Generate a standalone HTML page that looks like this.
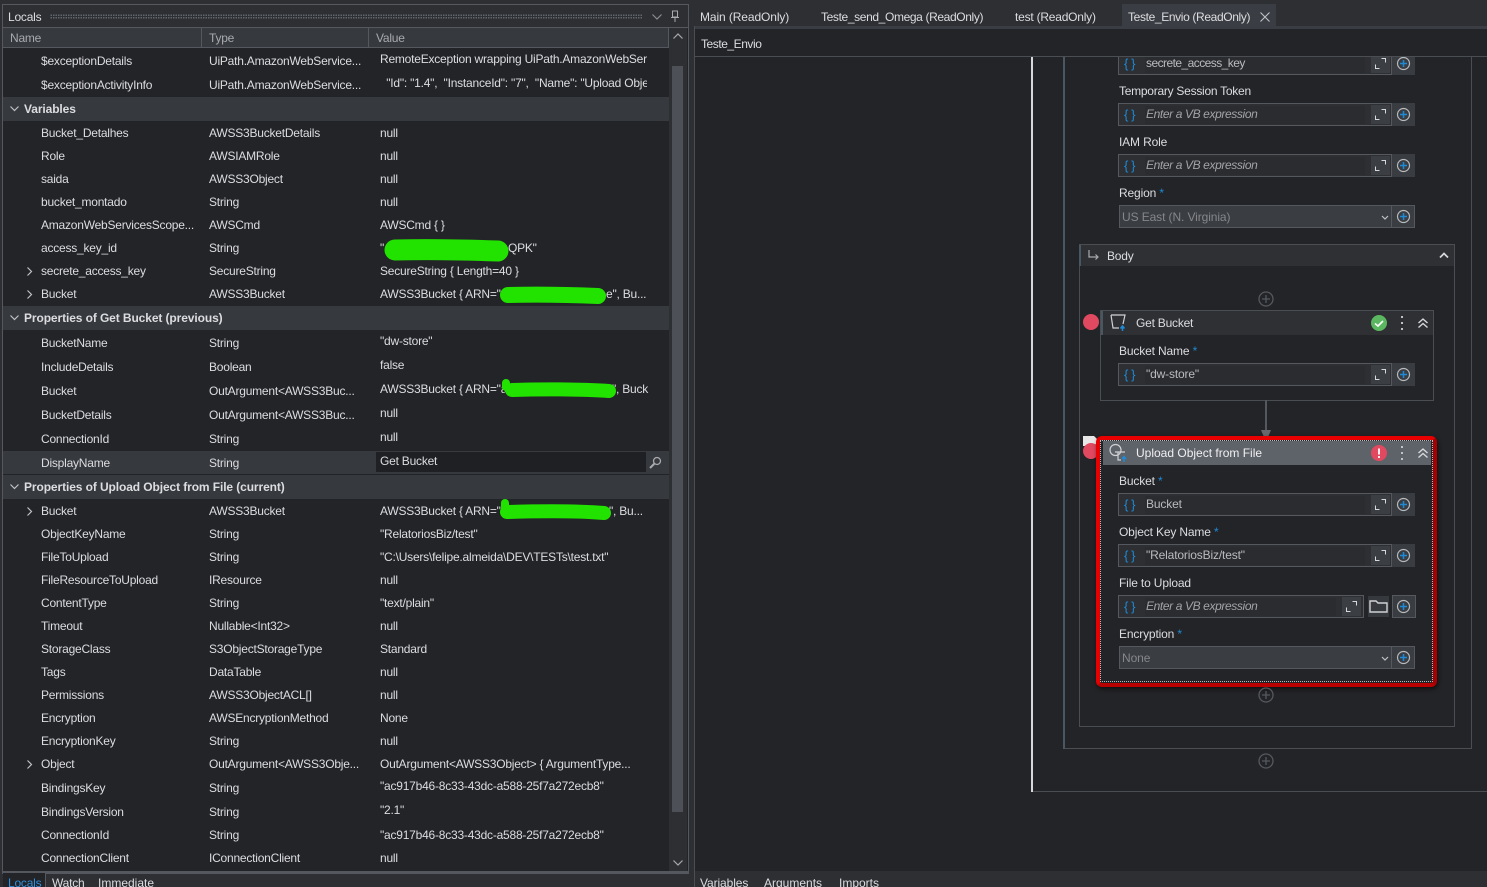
<!DOCTYPE html>
<html><head><meta charset="utf-8"><style>
html,body{margin:0;padding:0;background:#2d2f33;height:887px;overflow:hidden}
body{width:1487px;height:887px;overflow:hidden;position:relative;font:12px/16px "Liberation Sans",sans-serif;color:#dcdde0;letter-spacing:-.22px}
div,span,svg,i{position:absolute}
svg{overflow:visible}
.nw{white-space:nowrap}
.r{left:0;width:668px;height:16px;white-space:nowrap}
.r span{top:0}
.n{left:41px}.t{left:209px}.v{left:380px}
.h{left:3px;width:666px;height:24px;background:#36393e}
.h span{left:21px;top:4px;font-weight:bold;letter-spacing:-.1px}
.l{left:1119px;white-space:nowrap;letter-spacing:-.15px}
.l b{color:#1e8ad6;font-weight:normal}
.f{left:1118px;width:295px;height:21px;border:1px solid #55585e;background:#2d2f33}
.f .x{left:26px;top:2px;width:220px;height:18px;background:#2a2c30;color:#b9bbbf;line-height:17px;text-indent:1px;white-space:nowrap;letter-spacing:-.15px}
.f .x.p{font-style:italic;color:#a2a4a8;letter-spacing:-.38px}
.f .br{left:5px;top:2px;color:#1e8ad6;font-size:13px;line-height:17px;letter-spacing:-.4px;white-space:pre}
.f .e{left:252px;top:1px;width:19px;height:19px;background:#3b3e43}
.f .pb{left:272px;top:-1px;width:23px;height:23px;background:#393c41;border-left:1px solid #55585e}
.c{left:1119px;width:294px;height:21px;border:1px solid #55585e;background:#3a3d42;color:#85878b}
.c .tx{left:2px;top:2px;line-height:18px;letter-spacing:-.1px}
</style></head><body>
<svg width="0" height="0" style="left:0;top:0"><defs>
<symbol id="ex" viewBox="0 0 19 19"><path d="M4.500 10.500v4h4M10.500 4.500h4v4" fill="none" stroke="#d8d9dc" stroke-width="1"/></symbol>
<symbol id="pl" viewBox="0 0 23 23"><circle cx="11.500" cy="11.500" r="6" fill="none" stroke="#b9bbbf" stroke-width="1.200"/><path d="M8 11.500h7M11.500 8v7" stroke="#1e8ad6" stroke-width="1.500"/></symbol>
<symbol id="dbl" viewBox="0 0 12 12"><path d="M1.500 6l4.500-4 4.500 4M1.500 10.500l4.500-4 4.500 4" fill="none" stroke="#d8d9dc" stroke-width="1.400"/></symbol>
</defs></svg>

<!-- LEFT PANEL -->
<div style="left:2px;top:4px;width:685px;height:868px;border:1px solid #55585e;background:#232427"></div>
<div style="left:3px;top:5px;width:685px;height:22px;background:#2d2f33;border-bottom:1px solid #55585e"></div>
<div class="nw" style="left:8px;top:9px">Locals</div>
<div style="left:50px;top:14px;width:593px;height:5px;background-image:radial-gradient(#63666b 0.7px,transparent 0.8px);background-size:2.500px 2.500px"></div>
<svg style="left:652px;top:14px" width="10" height="6"><path d="M0.500 0.500l4.500 4.500 4.500-4.500" fill="none" stroke="#8a8c90" stroke-width="1.200"/></svg>
<svg style="left:671px;top:10px" width="8" height="12"><path d="M1.500 1h5v6h-5zM0 7.500h8M4 8v4" fill="none" stroke="#a8aaae"/></svg>
<div style="left:3px;top:28px;width:665px;height:19px;background:#36393e;border-bottom:1px solid #55585e;border-right:1px solid #55585e"></div>
<div style="left:201px;top:28px;width:1px;height:19px;background:#55585e"></div>
<div style="left:368px;top:28px;width:1px;height:19px;background:#55585e"></div>
<div class="nw" style="left:10px;top:30px;color:#a8aaae">Name</div>
<div class="nw" style="left:209px;top:30px;color:#a8aaae">Type</div>
<div class="nw" style="left:376px;top:30px;color:#a8aaae">Value</div>

<!-- scrollbar -->
<div style="left:669px;top:28px;width:18px;height:844px;background:#2d2f33"></div>
<div style="left:672px;top:66px;width:11px;height:746px;background:#4d5057"></div>
<svg style="left:673px;top:33px" width="10" height="6"><path d="M0.500 5.500l4.500-4.500 4.500 4.500" fill="none" stroke="#a8aaae" stroke-width="1.200"/></svg>
<svg style="left:673px;top:860px" width="10" height="6"><path d="M0.500 0.500l4.500 4.500 4.500-4.500" fill="none" stroke="#a8aaae" stroke-width="1.200"/></svg>

<!-- section headers -->
<div class="h" style="top:97px"><span>Variables</span></div>
<div class="h" style="top:306px"><span>Properties of Get Bucket (previous)</span></div>
<div class="h" style="top:475px"><span>Properties of Upload Object from File (current)</span></div>
<svg style="left:10px;top:106px" width="9" height="6"><path d="M0.500 0.500l4 4 4-4" fill="none" stroke="#c0c2c6" stroke-width="1.200"/></svg>
<svg style="left:10px;top:315px" width="9" height="6"><path d="M0.500 0.500l4 4 4-4" fill="none" stroke="#c0c2c6" stroke-width="1.200"/></svg>
<svg style="left:10px;top:484px" width="9" height="6"><path d="M0.500 0.500l4 4 4-4" fill="none" stroke="#c0c2c6" stroke-width="1.200"/></svg>
<svg style="left:27px;top:267px" width="6" height="9"><path d="M0.500 0.500l4 4-4 4" fill="none" stroke="#c0c2c6" stroke-width="1.200"/></svg>
<svg style="left:27px;top:290px" width="6" height="9"><path d="M0.500 0.500l4 4-4 4" fill="none" stroke="#c0c2c6" stroke-width="1.200"/></svg>
<svg style="left:27px;top:507px" width="6" height="9"><path d="M0.500 0.500l4 4-4 4" fill="none" stroke="#c0c2c6" stroke-width="1.200"/></svg>
<svg style="left:27px;top:760px" width="6" height="9"><path d="M0.500 0.500l4 4-4 4" fill="none" stroke="#c0c2c6" stroke-width="1.200"/></svg>

<!-- display name row -->
<div style="left:3px;top:451px;width:666px;height:23px;background:#36393e"></div>
<div style="left:376px;top:452px;width:270px;height:20px;background:#1f2023"></div>
<svg style="left:649px;top:456px" width="13" height="13"><circle cx="8" cy="5" r="3.500" fill="none" stroke="#a8aaae" stroke-width="1.300"/><path d="M5.500 7.500L1 12" stroke="#a8aaae" stroke-width="2"/></svg>

<!-- rows -->
<div class="r" style="top:53px"><span class="n">$exceptionDetails</span><span class="t">UiPath.AmazonWebService...</span></div>
<div class="nw" style="left:380px;top:51px;width:267px;overflow:hidden">RemoteException wrapping UiPath.AmazonWebServices</div>
<div class="r" style="top:77px"><span class="n">$exceptionActivityInfo</span><span class="t">UiPath.AmazonWebService...</span></div>
<div class="nw" style="left:380px;top:75px;width:267px;overflow:hidden;white-space:pre">  "Id": "1.4",  "InstanceId": "7",  "Name": "Upload Object</div>
<div class="r" style="top:125px"><span class="n">Bucket_Detalhes</span><span class="t">AWSS3BucketDetails</span><span class="v">null</span></div>
<div class="r" style="top:148px"><span class="n">Role</span><span class="t">AWSIAMRole</span><span class="v">null</span></div>
<div class="r" style="top:171px"><span class="n">saida</span><span class="t">AWSS3Object</span><span class="v">null</span></div>
<div class="r" style="top:194px"><span class="n">bucket_montado</span><span class="t">String</span><span class="v">null</span></div>
<div class="r" style="top:217px"><span class="n">AmazonWebServicesScope...</span><span class="t">AWSCmd</span><span class="v">AWSCmd { }</span></div>
<div class="r" style="top:240px"><span class="n">access_key_id</span><span class="t">String</span><span class="v">"</span><span style="left:508px">QPK"</span></div>
<div class="r" style="top:263px"><span class="n">secrete_access_key</span><span class="t">SecureString</span><span class="v">SecureString { Length=40 }</span></div>
<div class="r" style="top:286px"><span class="n">Bucket</span><span class="t">AWSS3Bucket</span><span class="v">AWSS3Bucket { ARN="a</span><span style="left:606px">e", Bu...</span></div>
<div class="r" style="top:335px"><span class="n">BucketName</span><span class="t">String</span><span class="v" style="top:-2px">"dw-store"</span></div>
<div class="r" style="top:359px"><span class="n">IncludeDetails</span><span class="t">Boolean</span><span class="v" style="top:-2px">false</span></div>
<div class="r" style="top:383px"><span class="n">Bucket</span><span class="t">OutArgument&lt;AWSS3Buc...</span><span class="v" style="top:-2px">AWSS3Bucket { ARN="a</span><span style="left:612px;top:-2px">", Buck</span></div>
<div class="r" style="top:407px"><span class="n">BucketDetails</span><span class="t">OutArgument&lt;AWSS3Buc...</span><span class="v" style="top:-2px">null</span></div>
<div class="r" style="top:431px"><span class="n">ConnectionId</span><span class="t">String</span><span class="v" style="top:-2px">null</span></div>
<div class="r" style="top:455px"><span class="n">DisplayName</span><span class="t">String</span><span class="v" style="top:-2px">Get Bucket</span></div>
<div class="r" style="top:503px"><span class="n">Bucket</span><span class="t">AWSS3Bucket</span><span class="v">AWSS3Bucket { ARN="</span><span style="left:609px">", Bu...</span></div>
<div class="r" style="top:526px"><span class="n">ObjectKeyName</span><span class="t">String</span><span class="v">"RelatoriosBiz/test"</span></div>
<div class="r" style="top:549px"><span class="n">FileToUpload</span><span class="t">String</span><span class="v">"C:\Users\felipe.almeida\DEV\TESTs\test.txt"</span></div>
<div class="r" style="top:572px"><span class="n">FileResourceToUpload</span><span class="t">IResource</span><span class="v">null</span></div>
<div class="r" style="top:595px"><span class="n">ContentType</span><span class="t">String</span><span class="v">"text/plain"</span></div>
<div class="r" style="top:618px"><span class="n">Timeout</span><span class="t">Nullable&lt;Int32&gt;</span><span class="v">null</span></div>
<div class="r" style="top:641px"><span class="n">StorageClass</span><span class="t">S3ObjectStorageType</span><span class="v">Standard</span></div>
<div class="r" style="top:664px"><span class="n">Tags</span><span class="t">DataTable</span><span class="v">null</span></div>
<div class="r" style="top:687px"><span class="n">Permissions</span><span class="t">AWSS3ObjectACL[]</span><span class="v">null</span></div>
<div class="r" style="top:710px"><span class="n">Encryption</span><span class="t">AWSEncryptionMethod</span><span class="v">None</span></div>
<div class="r" style="top:733px"><span class="n">EncryptionKey</span><span class="t">String</span><span class="v">null</span></div>
<div class="r" style="top:756px"><span class="n">Object</span><span class="t">OutArgument&lt;AWSS3Obje...</span><span class="v">OutArgument&lt;AWSS3Object&gt; { ArgumentType...</span></div>
<div class="r" style="top:780px"><span class="n">BindingsKey</span><span class="t">String</span><span class="v" style="top:-2px">"ac917b46-8c33-43dc-a588-25f7a272ecb8"</span></div>
<div class="r" style="top:804px"><span class="n">BindingsVersion</span><span class="t">String</span><span class="v" style="top:-2px">"2.1"</span></div>
<div class="r" style="top:827px"><span class="n">ConnectionId</span><span class="t">String</span><span class="v">"ac917b46-8c33-43dc-a588-25f7a272ecb8"</span></div>
<div class="r" style="top:850px"><span class="n">ConnectionClient</span><span class="t">IConnectionClient</span><span class="v">null</span></div>

<!-- green scribbles -->
<svg style="left:0;top:0" width="700" height="540">
<g fill="none" stroke="#22e200" stroke-linecap="round" stroke-linejoin="round">
<path d="M395 250C430 249 470 250 498 251" stroke-width="21"/>
<path d="M508 295C540 294 575 295 598 296" stroke-width="16"/>
<path d="M512 390C540 389 580 389 609 391" stroke-width="14"/><path d="M506 383v4" stroke-width="8"/>
<path d="M507 512C540 511 580 511 604 513" stroke-width="14"/><path d="M505 503v4" stroke-width="8"/>
</g></svg>

<!-- bottom left tabs -->
<div style="left:3px;top:871px;width:685px;height:2px;background:#55585e"></div>
<div style="left:3px;top:873px;width:42px;height:14px;background:#232427;border-right:1px solid #55585e"></div>
<div class="nw" style="left:8px;top:875px;color:#2f8fdc">Locals</div>
<div class="nw" style="left:52px;top:875px">Watch</div>
<div class="nw" style="left:98px;top:875px;letter-spacing:0">Immediate</div>

<!-- RIGHT PANE -->
<div style="left:694px;top:26px;width:793px;height:3px;background:#3a3d43"></div>
<div style="left:694px;top:29px;width:793px;height:842px;background:#232427"></div>
<div style="left:694px;top:26px;width:1px;height:861px;background:#4a4d52"></div>
<div class="nw" style="left:700px;top:9px;letter-spacing:-.1px">Main (ReadOnly)</div>
<div class="nw" style="left:821px;top:9px;letter-spacing:-.37px">Teste_send_Omega (ReadOnly)</div>
<div class="nw" style="left:1015px;top:9px">test (ReadOnly)</div>
<div style="left:1122px;top:4px;width:154px;height:22px;background:#3a3d43"></div>
<div class="nw" style="left:1128px;top:9px;letter-spacing:-.36px">Teste_Envio (ReadOnly)</div>
<svg style="left:1260px;top:12px" width="10" height="10"><path d="M0.500 0.500l9 9M9.500 0.500l-9 9" stroke="#c0c2c6" stroke-width="1.100"/></svg>

<!-- canvas -->
<div style="left:1031px;top:57px;width:2px;height:735px;background:#d8d9dc"></div>
<div style="left:1033px;top:791px;width:454px;height:1px;background:#4a4d52"></div>
<div style="left:1063px;top:57px;width:2px;height:692px;background:#4a5661"></div>
<div style="left:1065px;top:748px;width:407px;height:1px;background:#4a4d52"></div>
<div style="left:1471px;top:57px;width:1px;height:692px;background:#4a4d52"></div>

<!-- upper fields -->
<div class="f" style="top:52px"><span class="br">{ }</span><span class="x" style="letter-spacing:-.55px">secrete_access_key</span><span class="e"><svg width="19" height="19" style="left:0;top:0"><use href="#ex"/></svg></span><span class="pb"><svg width="23" height="23" style="left:0;top:0"><use href="#pl"/></svg></span></div>
<div class="l" style="top:83px;letter-spacing:-.26px">Temporary Session Token</div>
<div class="f" style="top:103px"><span class="br">{ }</span><span class="x p">Enter a VB expression</span><span class="e"><svg width="19" height="19" style="left:0;top:0"><use href="#ex"/></svg></span><span class="pb"><svg width="23" height="23" style="left:0;top:0"><use href="#pl"/></svg></span></div>
<div class="l" style="top:134px">IAM Role</div>
<div class="f" style="top:154px"><span class="br">{ }</span><span class="x p">Enter a VB expression</span><span class="e"><svg width="19" height="19" style="left:0;top:0"><use href="#ex"/></svg></span><span class="pb"><svg width="23" height="23" style="left:0;top:0"><use href="#pl"/></svg></span></div>
<div class="l" style="top:185px">Region <b>*</b></div>
<div class="c" style="top:205px"><span class="tx">US East (N. Virginia)</span><svg style="left:261px;top:9px" width="8" height="5"><path d="M1 1l3 3 3-3" fill="none" stroke="#c0c2c6" stroke-width="1.200"/></svg><span style="left:271px;top:-1px;width:23px;height:23px;border-left:1px solid #55585e"><svg width="23" height="23" style="left:0;top:0"><use href="#pl"/></svg></span></div>
<!-- mask above the canvas -->
<div style="left:695px;top:29px;width:792px;height:27px;background:#232427;border-bottom:1px solid #4a4d52"></div>
<div class="nw" style="left:701px;top:36px;letter-spacing:-.45px">Teste_Envio</div>

<!-- Body -->
<div style="left:1079px;top:244px;width:374px;height:481px;border:1px solid #4a4d52"></div>
<div style="left:1080px;top:245px;width:374px;height:21px;background:#2e3034"></div>
<div style="left:1079px;top:245px;width:2px;height:21px;background:#4a5661"></div>
<svg style="left:1088px;top:250px" width="12" height="11"><path d="M1 0v7h9M7.500 4.500L10 7l-2.500 2.500" fill="none" stroke="#a8aaae" stroke-width="1.200"/></svg>
<div class="nw" style="left:1107px;top:248px">Body</div>
<svg style="left:1439px;top:252px" width="10" height="7"><path d="M1 5.500l4-4 4 4" fill="none" stroke="#d8d9dc" stroke-width="1.700"/></svg>
<svg style="left:1258px;top:291px" width="16" height="16"><circle cx="8" cy="8" r="7" fill="none" stroke="#55585e" stroke-width="1.300"/><path d="M4 8h8M8 4v8" stroke="#55585e" stroke-width="1.300"/></svg>

<!-- Get Bucket -->
<div style="left:1100px;top:310px;width:332px;height:89px;border:1px solid #4a4d52"></div>
<div style="left:1101px;top:311px;width:332px;height:24px;background:#2e3034"></div>
<div style="left:1101px;top:311px;width:2px;height:24px;background:#4a5661"></div>
<svg style="left:1110px;top:314px" width="17" height="17"><path d="M1 1h14l-2 9M1 1l2 13h6" fill="none" stroke="#d0d1d4" stroke-width="1.200"/><path d="M12.500 17v-4M10.500 14.500l2-2.500 2 2.500" fill="none" stroke="#1e8ad6" stroke-width="1.500"/></svg>
<div class="nw" style="left:1136px;top:315px">Get Bucket</div>
<svg style="left:1371px;top:315px" width="16" height="16"><circle cx="8" cy="8" r="8" fill="#5cb860"/><path d="M4 8.500l3 2.500 5-5" fill="none" stroke="#fff" stroke-width="1.600"/></svg>
<svg style="left:1400px;top:316px" width="4" height="14"><g fill="#c0c2c6"><rect x="1" y="0" width="2" height="2"/><rect x="1" y="6" width="2" height="2"/><rect x="1" y="12" width="2" height="2"/></g></svg>
<svg style="left:1417px;top:317px" width="12" height="12"><use href="#dbl"/></svg>
<div class="l" style="top:343px">Bucket Name <b>*</b></div>
<div class="f" style="top:363px"><span class="br">{ }</span><span class="x">"dw-store"</span><span class="e"><svg width="19" height="19" style="left:0;top:0"><use href="#ex"/></svg></span><span class="pb"><svg width="23" height="23" style="left:0;top:0"><use href="#pl"/></svg></span></div>

<!-- connector -->
<div style="left:1265px;top:400px;width:2px;height:32px;background:#55585e"></div>
<svg style="left:1261px;top:430px" width="10" height="7"><path d="M0 0h10l-3 7H3z" fill="#66686c"/></svg>

<!-- breakpoints -->
<div style="left:1083px;top:314px;width:16px;height:16px;border-radius:50%;background:#e0495f"></div>
<svg style="left:1083px;top:436px" width="16" height="10"><path d="M0 0h11l5 5-5 5H0z" fill="#e8e8e8"/></svg>
<div style="left:1083px;top:443px;width:16px;height:16px;border-radius:50%;background:#e0495f"></div>

<!-- Upload -->
<div style="left:1096px;top:436px;width:333px;height:243px;border:4px solid #e80000;border-bottom-color:#b80000;border-right-color:#a80000;border-radius:6px;box-shadow:1px 2px 4px rgba(0,0,0,.6)"></div>
<div style="left:1100px;top:440px;width:331px;height:240px;border:1px dotted #b9bbbf;background:#232427"></div>
<div style="left:1103px;top:441px;width:328px;height:24px;background:#5e6269"></div>
<svg style="left:1109px;top:444px" width="18" height="18"><circle cx="6.500" cy="6" r="5.500" fill="none" stroke="#d0d1d4" stroke-width="1.200"/><path d="M6 8h10M9 8v8h3" fill="none" stroke="#d0d1d4" stroke-width="1.200"/><path d="M15 18v-4M13 15l2-2.500 2 2.500" fill="none" stroke="#1e8ad6" stroke-width="1.500"/></svg>
<div class="nw" style="left:1136px;top:445px;color:#f0f0f2;letter-spacing:0">Upload Object from File</div>
<svg style="left:1371px;top:445px" width="16" height="16"><circle cx="8" cy="8" r="8" fill="#e0495f"/><path d="M8 3.500v6M8 11v2" stroke="#fff" stroke-width="1.800"/></svg>
<svg style="left:1400px;top:446px" width="4" height="14"><g fill="#c0c2c6"><rect x="1" y="0" width="2" height="2"/><rect x="1" y="6" width="2" height="2"/><rect x="1" y="12" width="2" height="2"/></g></svg>
<svg style="left:1417px;top:447px" width="12" height="12"><use href="#dbl"/></svg>

<div class="l" style="top:473px">Bucket <b>*</b></div>
<div class="f" style="top:493px"><span class="br">{ }</span><span class="x">Bucket</span><span class="e"><svg width="19" height="19" style="left:0;top:0"><use href="#ex"/></svg></span><span class="pb"><svg width="23" height="23" style="left:0;top:0"><use href="#pl"/></svg></span></div>
<div class="l" style="top:524px">Object Key Name <b>*</b></div>
<div class="f" style="top:544px"><span class="br">{ }</span><span class="x">"RelatoriosBiz/test"</span><span class="e"><svg width="19" height="19" style="left:0;top:0"><use href="#ex"/></svg></span><span class="pb"><svg width="23" height="23" style="left:0;top:0"><use href="#pl"/></svg></span></div>
<div class="l" style="top:575px">File to Upload</div>
<div class="f" style="top:595px;width:244px"><span class="br">{ }</span><span class="x p" style="width:191px">Enter a VB expression</span><span class="e" style="left:223px"><svg width="19" height="19" style="left:0;top:0"><use href="#ex"/></svg></span></div>
<div style="left:1368px;top:596px;width:21px;height:21px;background:#36393e"></div>
<svg style="left:1369px;top:599px" width="19" height="15"><path d="M1 13V2h6l2 2h9v9z" fill="none" stroke="#d0d1d4" stroke-width="1.400"/></svg>
<div style="left:1392px;top:595px;width:22px;height:21px;border:1px solid #55585e;background:#393c41"><svg width="23" height="23" style="left:-1px;top:-1px"><use href="#pl"/></svg></div>
<div class="l" style="top:626px">Encryption <b>*</b></div>
<div class="c" style="top:646px"><span class="tx">None</span><svg style="left:261px;top:9px" width="8" height="5"><path d="M1 1l3 3 3-3" fill="none" stroke="#c0c2c6" stroke-width="1.200"/></svg><span style="left:271px;top:-1px;width:23px;height:23px;border-left:1px solid #55585e"><svg width="23" height="23" style="left:0;top:0"><use href="#pl"/></svg></span></div>

<svg style="left:1258px;top:687px" width="16" height="16"><circle cx="8" cy="8" r="7" fill="none" stroke="#55585e" stroke-width="1.300"/><path d="M4 8h8M8 4v8" stroke="#55585e" stroke-width="1.300"/></svg>
<svg style="left:1258px;top:753px" width="16" height="16"><circle cx="8" cy="8" r="7" fill="none" stroke="#55585e" stroke-width="1.300"/><path d="M4 8h8M8 4v8" stroke="#55585e" stroke-width="1.300"/></svg>

<!-- bottom right tabs -->
<div style="left:695px;top:871px;width:792px;height:16px;background:#2d2f33"></div>
<div class="nw" style="left:700px;top:875px;letter-spacing:-.1px">Variables</div>
<div class="nw" style="left:764px;top:875px;letter-spacing:0">Arguments</div>
<div class="nw" style="left:839px;top:875px;letter-spacing:0">Imports</div>
</body></html>
